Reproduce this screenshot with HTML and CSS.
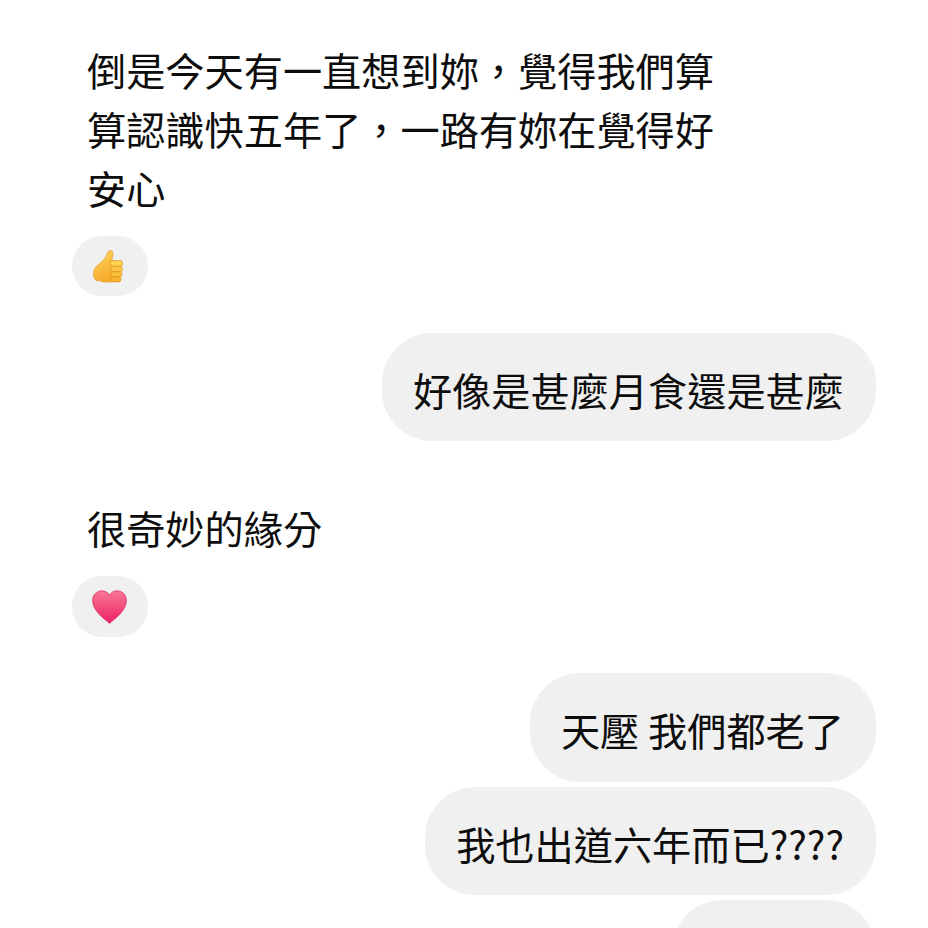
FILE: index.html
```html
<!DOCTYPE html>
<html lang="zh-Hant">

<head>
    <meta charset="UTF-8">
    <meta name="viewport" content="width=device-width, initial-scale=1.0">
    <title>Chat</title>
    <link rel="stylesheet" href="styles.css">
</head>

<body>
    <div class="chat">
        <div class="msg-in">
            <p class="msg-text">倒是今天有一直想到妳，覺得我們算<br>算認識快五年了，一路有妳在覺得好<br>安心</p>
            <div class="reaction">
                <svg class="icon-thumb" viewBox="0 0 30 33" aria-hidden="true">
                    <defs>
                        <linearGradient id="thumbFill" x1="0" y1="0" x2="0.4" y2="1">
                            <stop offset="0" stop-color="#ffdc62"/>
                            <stop offset="1" stop-color="#f6ab2c"/>
                        </linearGradient>
                    </defs>
                    <!-- palm and thumb -->
                    <path d="M16.200.6c2-.8 3.800.6 3.800 3 0 2.700-.8 4.900-1.400 6.900h1.400V32h-8.500c-2.200 0-3.700-.7-5-1.500-.9.300-1.700.4-2.500.3C1.800 30.400.4 27 .4 23.500c0-3 1.300-5.700 3.300-7.500 3.500-3.100 7.500-5.800 9.800-10.500.8-1.700 1-4 2.700-4.900z" fill="url(#thumbFill)" stroke="#dc9420" stroke-width=".6"/>
                    <!-- fingers -->
                    <rect x="17" y="10.500" width="12.600" height="5.800" rx="2.900" fill="#ffd450" stroke="#dc9420" stroke-width=".7"/>
                    <rect x="17.500" y="16.300" width="12" height="5.400" rx="2.700" fill="#fdc840" stroke="#dc9420" stroke-width=".7"/>
                    <rect x="17.800" y="21.700" width="11.200" height="5.200" rx="2.600" fill="#fbbf38" stroke="#dc9420" stroke-width=".7"/>
                    <rect x="18" y="26.900" width="10" height="5" rx="2.500" fill="#f8b431" stroke="#dc9420" stroke-width=".7"/>
                </svg>
            </div>
        </div>

        <div class="msg-out">
            <div class="bubble">好像是甚麼月食還是甚麼</div>
        </div>

        <div class="msg-in msg-in-short">
            <p class="msg-text">很奇妙的緣分</p>
            <div class="reaction reaction-tall">
                <svg class="icon-heart" viewBox="0 0 34 33" aria-hidden="true">
                    <defs>
                        <linearGradient id="heartFill" x1="0" y1="0" x2="0" y2="1">
                            <stop offset="0" stop-color="#fb7795"/>
                            <stop offset="1" stop-color="#ec2066"/>
                        </linearGradient>
                    </defs>
                    <path d="M17 32.400C11 27.500.6 20 .6 10.200.6 4.500 4.700.8 9.500.8c3.400 0 6 1.600 7.500 4.200C18.500 2.400 21.100.8 24.500.8c4.800 0 8.900 3.700 8.900 9.400C33.400 20 23 27.500 17 32.400z" fill="url(#heartFill)" stroke="#d92a63" stroke-width=".7"/>
                </svg>
            </div>
        </div>

        <div class="msg-out msg-out-group">
            <div class="bubble bubble-first">天壓 我們都老了</div>
            <div class="bubble">我也出道六年而已????</div>
            <div class="bubble bubble-cut"></div>
        </div>
    </div>
</body>

</html>
```

FILE: styles.css
```css
* {
    margin: 0;
    padding: 0;
    box-sizing: border-box;
}

html,
body {
    height: 928px;
    overflow: hidden;
    background-color: #fff;
}

body {
    font-family: "Noto Sans CJK TC", "Liberation Sans", sans-serif;
    color: #0d0d0d;
}

.chat {
    display: flex;
    flex-direction: column;
    padding: 40px 52px 0 72px;
    font-size: 39.2px;
    line-height: 59px;
}

.msg-text {
    padding-left: 15px;
    white-space: nowrap;
}

.reaction {
    display: flex;
    justify-content: center;
    align-items: center;
    width: 76px;
    height: 60px;
    margin-top: 19px;
    border-radius: 30px;
    background-color: #f0f0f0;
}

.reaction-tall {
    height: 61px;
}

.icon-thumb {
    width: 30px;
    height: 33px;
    margin-right: 4px;
}

.icon-heart {
    width: 35px;
    height: 34px;
    margin-right: 2px;
}

.msg-out {
    display: flex;
    flex-direction: column;
    align-items: flex-end;
    margin-top: 37px;
}

.msg-out-group {
    gap: 5px;
    margin-top: 36px;
}

.msg-in-short {
    margin-top: 57px;
}

.bubble {
    height: 108px;
    padding: 27px 32px 27px 31px;
    border-radius: 50px;
    background-color: #f0f0f0;
    white-space: nowrap;
}

.bubble-first {
    height: 109px;
}

.bubble-cut {
    width: 204px;
}
```
